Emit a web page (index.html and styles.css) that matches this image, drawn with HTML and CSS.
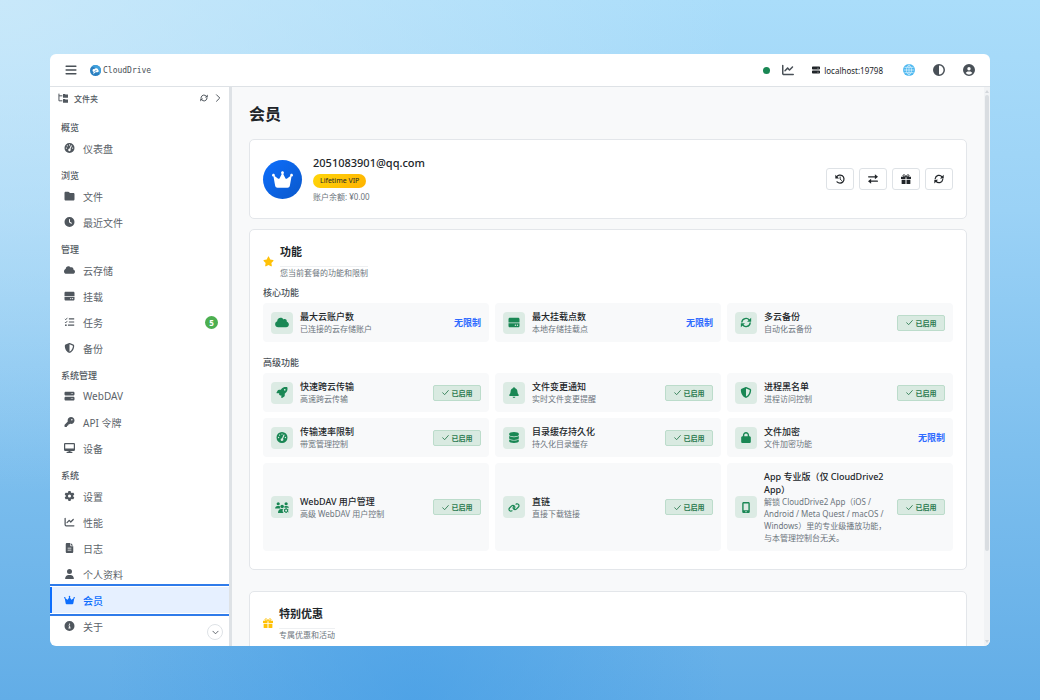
FILE: index.html
```html
<!DOCTYPE html>
<html lang="zh-CN">
<head>
<meta charset="UTF-8">
<title>CloudDrive - 会员</title>
<link rel="stylesheet" href="styles.css">
</head>
<body>

  <svg class="sprite" aria-hidden="true">
    <symbol id="i-bars" viewBox="0 0 16 16"><path d="M1.500 3h13M1.500 8h13M1.500 13h13" fill="none" stroke="currentColor" stroke-width="1.900" stroke-linecap="round"/></symbol>
    <symbol id="i-tree" viewBox="0 0 16 16"><path d="M1.500 1v11.500H7M1.500 4.500H7" fill="none" stroke="currentColor" stroke-width="1.600"/><path d="M8 1.500h3l1 1h4v5H8zM8 9.500h3l1 1h4v5H8z"/></symbol>
    <symbol id="i-sync" viewBox="0 0 16 16"><path d="M2 7.200A6 6 0 0 1 12.800 4.600M14 8.800A6 6 0 0 1 3.200 11.400" fill="none" stroke="currentColor" stroke-width="2" stroke-linecap="round"/><path d="M15.500 1v6h-6zM.500 15V9h6z"/></symbol>
    <symbol id="i-right" viewBox="0 0 16 16"><path d="M5 1.500L11.500 8 5 14.500" fill="none" stroke="currentColor" stroke-width="2" stroke-linecap="round" stroke-linejoin="round"/></symbol>
    <symbol id="i-down" viewBox="0 0 16 16"><path d="M2 5l6 6 6-6" fill="none" stroke="currentColor" stroke-width="2" stroke-linecap="round" stroke-linejoin="round"/></symbol>
    <symbol id="i-check" viewBox="0 0 16 16"><path d="M1.500 8.500L6 13l8.500-9.500" fill="none" stroke="currentColor" stroke-width="2" stroke-linecap="round" stroke-linejoin="round"/></symbol>
    <symbol id="i-gauge" viewBox="0 0 512 512"><path fill-rule="evenodd" d="M0 256a256 256 0 1 1 512 0A256 256 0 1 1 0 256zM256 64a32 32 0 1 0 0 64 32 32 0 1 0 0-64zM144 112a32 32 0 1 0 0 64 32 32 0 1 0 0-64zM96 224a32 32 0 1 0 0 64 32 32 0 1 0 0-64zM416 224a32 32 0 1 0 0 64 32 32 0 1 0 0-64zM324 130L256 288a64 64 0 1 0 48 22L372 150a24 24 0 0 0-48-20z"/></symbol>
    <symbol id="i-folder" viewBox="0 0 512 512"><path d="M64 480H448c35.300 0 64-28.700 64-64V160c0-35.300-28.700-64-64-64H288c-10.100 0-19.600-4.700-25.600-12.800L243.200 57.600C231.100 41.500 212.100 32 192 32H64C28.700 32 0 60.700 0 96V416c0 35.300 28.700 64 64 64z"/></symbol>
    <symbol id="i-clock" viewBox="0 0 512 512"><path d="M256 0a256 256 0 1 1 0 512A256 256 0 1 1 256 0zM232 120V256c0 8 4 15.500 10.700 20l96 64c11 7.400 25.900 4.400 33.300-6.700s4.400-25.900-6.700-33.300L280 243.200V120c0-13.300-10.700-24-24-24s-24 10.700-24 24z"/></symbol>
    <symbol id="i-cloud" viewBox="0 0 640 512"><path d="M0 336c0 79.500 64.500 144 144 144H512c70.700 0 128-57.300 128-128c0-61.900-44-113.600-102.400-125.400c4.100-10.700 6.400-22.400 6.400-34.600c0-53-43-96-96-96c-19.700 0-38.100 6-53.300 16.200C367 64.200 315.300 32 256 32C167.600 32 96 103.600 96 192c0 2.700 .1 5.400 .2 8.100C40.200 219.800 0 273.200 0 336z"/></symbol>
    <symbol id="i-drive" viewBox="0 0 512 512"><path fill-rule="evenodd" d="M0 96C0 60.700 28.700 32 64 32H448c35.300 0 64 28.700 64 64V256H0zM0 296H512V416c0 35.300-28.700 64-64 64H64c-35.300 0-64-28.700-64-64zM320 416a32 32 0 1 0 0-64 32 32 0 1 0 0 64zm128-32a32 32 0 1 0 -64 0 32 32 0 1 0 64 0z"/></symbol>
    <symbol id="i-tasks" viewBox="0 0 16 16"><path d="M7 3h8.500M7 8h8.500M5.500 13h10" fill="none" stroke="currentColor" stroke-width="1.800"/><path d="M.700 3l1.300 1.400L4.500 1.300M.700 8l1.300 1.400 2.500-3.100" fill="none" stroke="currentColor" stroke-width="1.400"/><circle cx="2.200" cy="13" r="1.400"/></symbol>
    <symbol id="i-shield" viewBox="0 0 512 512"><path d="M256 0c4.600 0 9.200 1 13.400 2.900L457.700 82.800c22 9.300 38.400 31 38.300 57.200c-.5 99.200-41.300 280.700-213.600 363.200c-16.700 8-36.100 8-52.800 0C57.300 420.700 16.500 239.200 16 140c-.1-26.200 16.300-47.900 38.300-57.200L242.700 2.900C246.800 1 251.400 0 256 0zm0 66.800V444.800C394 378 431.100 230.100 432 141.400L256 66.800z"/></symbol>
    <symbol id="i-server" viewBox="0 0 512 512"><path d="M64 32C28.700 32 0 60.700 0 96v64c0 35.300 28.700 64 64 64H448c35.300 0 64-28.700 64-64V96c0-35.300-28.700-64-64-64H64zm280 72a24 24 0 1 1 0 48 24 24 0 1 1 0-48zm48 24a24 24 0 1 1 48 0 24 24 0 1 1 -48 0zM64 288c-35.300 0-64 28.700-64 64v64c0 35.300 28.700 64 64 64H448c35.300 0 64-28.700 64-64V352c0-35.300-28.700-64-64-64H64zm280 72a24 24 0 1 1 0 48 24 24 0 1 1 0-48zm56 24a24 24 0 1 1 48 0 24 24 0 1 1 -48 0z"/></symbol>
    <symbol id="i-key" viewBox="0 0 512 512"><path d="M336 352c97.200 0 176-78.800 176-176S433.200 0 336 0S160 78.800 160 176c0 18.700 2.900 36.800 8.300 53.700L7 391c-4.500 4.500-7 10.600-7 17v80c0 13.300 10.700 24 24 24h80c13.300 0 24-10.700 24-24V448h40c13.300 0 24-10.700 24-24V384h40c6.400 0 12.500-2.500 17-7l33.300-33.300c16.900 5.400 35 8.300 53.700 8.300zM376 96a40 40 0 1 1 0 80 40 40 0 1 1 0-80z"/></symbol>
    <symbol id="i-desktop" viewBox="0 0 576 512"><path d="M64 0C28.700 0 0 28.700 0 64V352c0 35.300 28.700 64 64 64H240l-10.700 32H160c-17.700 0-32 14.300-32 32s14.300 32 32 32H416c17.700 0 32-14.300 32-32s-14.300-32-32-32H346.700L336 416H512c35.300 0 64-28.700 64-64V64c0-35.300-28.700-64-64-64H64zM512 64V288H64V64H512z"/></symbol>
    <symbol id="i-gear" viewBox="0 0 512 512"><path d="M495.900 166.600c3.200 8.700 .5 18.400-6.400 24.600l-43.300 39.400c1.100 8.300 1.700 16.800 1.700 25.400s-.6 17.100-1.700 25.400l43.300 39.400c6.900 6.200 9.600 15.900 6.400 24.600c-4.400 11.900-9.700 23.300-15.800 34.300l-4.700 8.100c-6.600 11-14 21.400-22.100 31.200c-5.900 7.200-15.700 9.600-24.500 6.800l-55.700-17.700c-13.400 10.300-28.200 18.900-44 25.400l-12.500 57.100c-2 9.100-9 16.300-18.200 17.800c-13.800 2.300-28 3.500-42.500 3.500s-28.700-1.200-42.500-3.500c-9.200-1.500-16.200-8.700-18.200-17.800l-12.500-57.100c-15.800-6.500-30.600-15.100-44-25.400L83.100 425.900c-8.800 2.800-18.600 .3-24.500-6.800c-8.100-9.800-15.500-20.200-22.100-31.200l-4.700-8.100c-6.100-11-11.400-22.400-15.800-34.300c-3.200-8.700-.5-18.400 6.400-24.600l43.300-39.400C64.600 273.100 64 264.600 64 256s.6-17.100 1.700-25.400L22.400 191.200c-6.900-6.200-9.600-15.900-6.400-24.600c4.400-11.900 9.700-23.300 15.800-34.300l4.700-8.100c6.600-11 14-21.400 22.100-31.200c5.900-7.200 15.700-9.600 24.500-6.800l55.700 17.700c13.400-10.300 28.200-18.900 44-25.400l12.500-57.100c2-9.100 9-16.300 18.200-17.800C227.300 1.200 241.500 0 256 0s28.700 1.200 42.500 3.500c9.200 1.500 16.200 8.700 18.200 17.800l12.500 57.100c15.800 6.500 30.600 15.100 44 25.400l55.700-17.700c8.800-2.800 18.600-.3 24.500 6.800c8.100 9.800 15.500 20.200 22.100 31.200l4.700 8.100c6.100 11 11.400 22.400 15.800 34.300zM256 336a80 80 0 1 0 0-160 80 80 0 1 0 0 160z"/></symbol>
    <symbol id="i-chart" viewBox="0 0 512 512"><path d="M64 64c0-17.700-14.300-32-32-32S0 46.300 0 64V400c0 44.200 35.800 80 80 80H480c17.700 0 32-14.300 32-32s-14.300-32-32-32H80c-8.800 0-16-7.200-16-16V64zm406.600 86.600c12.500-12.500 12.500-32.800 0-45.300s-32.800-12.500-45.300 0L320 210.700l-57.400-57.400c-12.500-12.500-32.800-12.500-45.300 0l-112 112c-12.500 12.500-12.500 32.800 0 45.300s32.800 12.500 45.300 0L240 221.300l57.400 57.400c12.500 12.500 32.800 12.500 45.300 0l128-128z"/></symbol>
    <symbol id="i-file" viewBox="0 0 384 512"><path fill-rule="evenodd" d="M64 0C28.700 0 0 28.700 0 64V448c0 35.300 28.700 64 64 64H320c35.300 0 64-28.700 64-64V160H256c-17.700 0-32-14.300-32-32V0H64zM256 0V128H384zM96 240H288v40H96zM96 340H288v40H96z"/></symbol>
    <symbol id="i-user" viewBox="0 0 448 512"><path d="M224 256A128 128 0 1 0 224 0a128 128 0 1 0 0 256zm-45.700 48C79.800 304 0 383.800 0 482.300C0 498.700 13.300 512 29.700 512H418.300c16.400 0 29.700-13.300 29.700-29.700C448 383.800 368.200 304 269.700 304H178.300z"/></symbol>
    <symbol id="i-crown" viewBox="0 0 576 512"><path d="M309 106c11.400-7 19-19.700 19-34c0-22.100-17.900-40-40-40s-40 17.900-40 40c0 14.400 7.600 27 19 34L209.700 220.600c-9.100 18.200-32.700 23.400-48.600 10.700L72 160c5-6.700 8-15 8-24c0-22.100-17.900-40-40-40S0 113.900 0 136s17.900 40 40 40c.2 0 .5 0 .7 0L86.400 427.400c5.500 30.400 32 52.600 63 52.600l277.200 0c30.900 0 57.400-22.100 63-52.600L535.300 176c.2 0 .5 0 .7 0c22.100 0 40-17.900 40-40s-17.900-40-40-40s-40 17.900-40 40c0 9 3 17.300 8 24l-89.100 71.300c-15.900 12.700-39.500 7.500-48.600-10.700L309 106z"/></symbol>
    <symbol id="i-info" viewBox="0 0 512 512"><path d="M256 512A256 256 0 1 0 256 0a256 256 0 1 0 0 512zM216 336h24V272H216c-13.300 0-24-10.700-24-24s10.700-24 24-24h48c13.300 0 24 10.700 24 24v88h8c13.300 0 24 10.700 24 24s-10.700 24-24 24H216c-13.300 0-24-10.700-24-24s10.700-24 24-24zm40-208a32 32 0 1 1 0 64 32 32 0 1 1 0-64z"/></symbol>
    <symbol id="i-globe" viewBox="0 0 16 16"><circle cx="8" cy="8" r="8" fill="#4db8f0"/><path d="M8 1v14M1 8h14M2 4.500h12M2 11.500h12M8 1C3.500 4 3.500 12 8 15M8 1c4.500 3 4.500 11 0 14" fill="none" stroke="#d5effc" stroke-width="1"/></symbol>
    <symbol id="i-half" viewBox="0 0 512 512"><path d="M448 256c0-106-86-192-192-192V448c106 0 192-86 192-192zM0 256a256 256 0 1 1 512 0A256 256 0 1 1 0 256z"/></symbol>
    <symbol id="i-account" viewBox="0 0 512 512"><path d="M399 384.200C376.900 345.800 335.400 320 288 320H224c-47.400 0-88.900 25.800-111 64.200c35.200 39.200 86.200 63.800 143 63.800s107.800-24.700 143-63.800zM0 256a256 256 0 1 1 512 0A256 256 0 1 1 0 256zm256 16a72 72 0 1 0 0-144 72 72 0 1 0 0 144z"/></symbol>
    <symbol id="i-history" viewBox="0 0 16 16"><path d="M2.500 4.800A6.400 6.400 0 1 1 3.300 12.500" fill="none" stroke="currentColor" stroke-width="2" stroke-linecap="round"/><path d="M.500 1v6h6z"/><path d="M8.200 4.800v3.500l2.300 2" fill="none" stroke="currentColor" stroke-width="1.500" stroke-linecap="round"/></symbol>
    <symbol id="i-exchange" viewBox="0 0 16 16"><path d="M1 4.500h11M15 11.500H4" fill="none" stroke="currentColor" stroke-width="2" stroke-linecap="round"/><path d="M11 .500l5 4-5 4zM5 7.500l-5 4 5 4z"/></symbol>
    <symbol id="i-gift" viewBox="0 0 16 16"><path d="M0 4.500h7.200v3.600H0zM8.800 4.500H16v3.600H8.800zM1 9.300h6.200V16H2a1 1 0 0 1-1-1zM8.800 9.300H15V15a1 1 0 0 1-1 1H8.800z"/><path d="M8 4.500C6.500 1.500 5.500 1 4.600 1a1.800 1.800 0 0 0 0 3.500zM8 4.500C9.500 1.500 10.500 1 11.400 1a1.800 1.800 0 0 1 0 3.500z" fill="none" stroke="currentColor" stroke-width="1.500"/></symbol>
    <symbol id="i-star" viewBox="0 0 576 512"><path d="M316.900 18C311.600 7 300.400 0 288.100 0s-23.400 7-28.800 18L195 150.300 51.400 171.500c-12 1.800-22 10.200-25.700 21.700s-.7 24.200 7.900 32.700L137.800 329 113.200 474.700c-2 12 3 24.200 12.900 31.300s23 8 33.800 2.300l128.300-68.500 128.300 68.500c10.800 5.700 23.900 4.900 33.800-2.300s14.900-19.300 12.900-31.300L438.500 329 542.700 225.900c8.600-8.500 11.700-21.200 7.900-32.700s-13.700-19.900-25.700-21.700L381.200 150.300 316.900 18z"/></symbol>
    <symbol id="i-rocket" viewBox="0 0 512 512"><path d="M156.600 384.900L125.700 354c-8.500-8.500-11.500-20.800-7.700-32.200c3-8.900 7-20.500 11.800-33.800L24 288c-8.600 0-16.600-4.600-20.900-12.100s-4.200-16.700 .2-24.100l52.500-88.500c13-21.900 36.500-35.300 61.900-35.300l82.300 0c2.400-4 4.800-7.700 7.200-11.300C289.100-4.100 411.100-8.100 483.900 5.300c11.600 2.100 20.600 11.200 22.800 22.800c13.400 72.900 9.300 194.800-111.400 276.700c-3.500 2.400-7.300 4.800-11.300 7.200v82.300c0 25.400-13.400 49-35.300 61.900l-88.500 52.500c-7.400 4.400-16.600 4.500-24.100 .2s-12.100-12.200-12.100-20.900V380.800c-14.100 4.900-26.400 8.900-35.700 11.900c-11.200 3.600-23.400 .5-31.800-7.800zM384 168a40 40 0 1 0 0-80 40 40 0 1 0 0 80z"/></symbol>
    <symbol id="i-bell" viewBox="0 0 448 512"><path d="M224 0c-17.700 0-32 14.300-32 32V51.200C119 66 64 130.600 64 208v18.800c0 47-17.300 92.400-48.500 127.600l-7.400 8.300c-8.400 9.400-10.400 22.900-5.300 34.400S19.400 416 32 416H416c12.600 0 24-7.400 29.200-18.900s3.100-25-5.300-34.400l-7.400-8.300C401.300 319.200 384 273.900 384 226.800V208c0-77.400-55-142-128-156.800V32c0-17.700-14.300-32-32-32zm45.300 493.300c12-12 18.700-28.300 18.700-45.300H224 160c0 17 6.700 33.300 18.700 45.300s28.300 18.700 45.300 18.700s33.300-6.700 45.300-18.700z"/></symbol>
    <symbol id="i-db" viewBox="0 0 448 512"><path d="M448 80v48c0 44.200-100.300 80-224 80S0 172.200 0 128V80C0 35.800 100.300 0 224 0S448 35.800 448 80zM393.200 214.700c20.800-7.400 39.900-16.900 54.800-28.600V288c0 44.200-100.300 80-224 80S0 332.200 0 288V186.100c14.900 11.800 34 21.200 54.800 28.600C99.700 230.700 159.500 240 224 240s124.300-9.300 169.200-25.300zM0 346.100c14.900 11.800 34 21.200 54.800 28.600C99.700 390.700 159.500 400 224 400s124.300-9.300 169.200-25.300c20.800-7.400 39.900-16.900 54.800-28.600V432c0 44.200-100.300 80-224 80S0 476.200 0 432V346.100z"/></symbol>
    <symbol id="i-lock" viewBox="0 0 448 512"><path d="M144 144v48H304V144c0-44.200-35.800-80-80-80s-80 35.800-80 80zM80 192V144C80 64.500 144.500 0 224 0s144 64.500 144 144v48h16c35.300 0 64 28.700 64 64V448c0 35.300-28.700 64-64 64H64c-35.300 0-64-28.700-64-64V256c0-35.300 28.700-64 64-64H80z"/></symbol>
    <symbol id="i-users" viewBox="0 0 20 16"><circle cx="4.500" cy="2.500" r="2.300"/><circle cx="16" cy="2.500" r="2.300"/><circle cx="10.200" cy="6.500" r="2.600"/><path d="M0 9.500C0 7 1.500 5.700 3.500 5.700h1.800c.8 0 1.300.2 1.700.5-.3 1.300.1 2.500.9 3.300zM20 8.500c0-1.800-1.500-2.800-3-2.800h-1.800c-.8 0-1.300.2-1.700.5.2.8.1 1.600-.1 2.300zM4.200 16c0-3.500 2-5.700 4.600-5.700h2.700c-1 2-.8 4.200.6 5.700z"/><circle cx="16" cy="12.500" r="2.300" fill="none" stroke="currentColor" stroke-width="1.600"/><path d="M16 8.800v1.600M16 14.600v1.400M12.700 10.700l1.400.8M18 13.600l1.400.8M19.300 10.700l-1.400.8M14 13.600l-1.400.8" stroke="currentColor" stroke-width="1.400"/></symbol>
    <symbol id="i-link" viewBox="0 0 640 512"><path d="M580 254c52-52 52-136 0-188c-46-46-119-52-172-14l-2 1c-14 10-17 30-7 44s30 17 44 7l2-1c27-20 65-17 89 7c27 27 27 71 0 98L422 321c-27 27-71 27-98 0c-24-24-27-62-7-89l1-2c10-14 7-34-7-44s-34-7-44 7l-1 2c-38 53-32 126 14 172c52 52 136 52 188 0zM60 258c-52 52-52 136 0 188c46 46 119 52 172 14l2-1c14-10 17-30 7-44s-30-17-44-7l-2 1c-27 20-65 17-89-7c-27-27-27-71 0-98L218 191c27-27 71-27 98 0c24 24 27 62 7 89l-1 2c-10 14-7 34 7 44s34 7 44-7l1-2c38-53 32-126-14-172c-52-52-136-52-188 0z"/></symbol>
    <symbol id="i-mobile" viewBox="0 0 384 512"><path fill-rule="evenodd" d="M16 64C16 28.700 44.700 0 80 0H304c35.300 0 64 28.700 64 64V448c0 35.300-28.700 64-64 64H80c-35.300 0-64-28.700-64-64zM80 64H304V384H80zM192 416a32 32 0 1 0 0 64 32 32 0 1 0 0-64z"/></symbol>
  </svg>

  <div class="window">
    <header class="topbar">
      <button class="icon-button menu-button" aria-label="菜单"><svg class="icon"><use href="#i-bars"/></svg></button>
      <a class="brand" href="#">
        <svg class="brand-logo" viewBox="0 0 24 24"><circle cx="12" cy="12" r="12" fill="#2a7fc1"/><path d="M12 0a12 12 0 0 1 12 12c0 4-2 7-4 9C20 12 14 6 4 3c2-2 5-3 8-3z" fill="#3fa0dc"/><path d="M8 15a3 3 0 0 1 1-6 5 5 0 0 1 9 2 3 3 0 0 1-1 5h-5l-5 4 1-5z" fill="#fff"/><path d="M10 15l4-4" stroke="#2a7fc1" stroke-width="2"/></svg>
        <span>CloudDrive</span>
      </a>
      <div class="topbar-right">
        <span class="status-dot"></span>
        <button class="icon-button" aria-label="性能"><svg class="icon"><use href="#i-chart"/></svg></button>
        <a class="host" href="#"><svg class="icon"><use href="#i-server"/></svg>localhost:19798</a>
        <div class="topbar-actions">
          <button class="icon-button" aria-label="语言"><svg class="icon"><use href="#i-globe"/></svg></button>
          <button class="icon-button" aria-label="主题"><svg class="icon"><use href="#i-half"/></svg></button>
          <button class="icon-button" aria-label="账户"><svg class="icon"><use href="#i-account"/></svg></button>
        </div>
      </div>
    </header>

    <div class="layout">
      <aside class="sidebar">
        <div class="folder-bar">
          <svg class="icon"><use href="#i-tree"/></svg>
          <span class="folder-title">文件夹</span>
          <button class="icon-button small" aria-label="刷新"><svg class="icon"><use href="#i-sync"/></svg></button>
          <button class="icon-button small" aria-label="展开"><svg class="icon"><use href="#i-right"/></svg></button>
        </div>
        <nav class="nav">
          <h2 class="nav-label">概览</h2>
          <ul class="nav-list">
            <li><a class="nav-item" href="#"><svg class="icon"><use href="#i-gauge"/></svg>仪表盘</a></li>
          </ul>
          <h2 class="nav-label">浏览</h2>
          <ul class="nav-list">
            <li><a class="nav-item" href="#"><svg class="icon"><use href="#i-folder"/></svg>文件</a></li>
            <li><a class="nav-item" href="#"><svg class="icon"><use href="#i-clock"/></svg>最近文件</a></li>
          </ul>
          <h2 class="nav-label">管理</h2>
          <ul class="nav-list">
            <li><a class="nav-item" href="#"><svg class="icon"><use href="#i-cloud"/></svg>云存储</a></li>
            <li><a class="nav-item" href="#"><svg class="icon"><use href="#i-drive"/></svg>挂载</a></li>
            <li><a class="nav-item" href="#"><svg class="icon"><use href="#i-tasks"/></svg>任务<span class="count">5</span></a></li>
            <li><a class="nav-item" href="#"><svg class="icon"><use href="#i-shield"/></svg>备份</a></li>
          </ul>
          <h2 class="nav-label">系统管理</h2>
          <ul class="nav-list">
            <li><a class="nav-item" href="#"><svg class="icon"><use href="#i-server"/></svg>WebDAV</a></li>
            <li><a class="nav-item" href="#"><svg class="icon"><use href="#i-key"/></svg>API 令牌</a></li>
            <li><a class="nav-item" href="#"><svg class="icon"><use href="#i-desktop"/></svg>设备</a></li>
          </ul>
          <h2 class="nav-label">系统</h2>
          <ul class="nav-list">
            <li><a class="nav-item" href="#"><svg class="icon"><use href="#i-gear"/></svg>设置</a></li>
            <li><a class="nav-item" href="#"><svg class="icon"><use href="#i-chart"/></svg>性能</a></li>
            <li><a class="nav-item" href="#"><svg class="icon"><use href="#i-file"/></svg>日志</a></li>
            <li><a class="nav-item" href="#"><svg class="icon"><use href="#i-user"/></svg>个人资料</a></li>
            <li><a class="nav-item active" href="#" aria-current="page"><svg class="icon"><use href="#i-crown"/></svg>会员</a></li>
            <li><a class="nav-item" href="#"><svg class="icon"><use href="#i-info"/></svg>关于</a></li>
          </ul>
        </nav>
        <button class="scroll-button" aria-label="向下滚动"><svg class="icon"><use href="#i-down"/></svg></button>
      </aside>

      <main class="content">
        <h1 class="page-title">会员</h1>

        <section class="card profile">
          <div class="avatar"><svg class="icon"><use href="#i-crown"/></svg></div>
          <div class="profile-text">
            <div class="email">2051083901@qq.com</div>
            <span class="vip">Lifetime VIP</span>
            <div class="balance">账户余额: ¥0.00</div>
          </div>
          <div class="profile-actions">
            <button class="action" aria-label="历史"><svg class="icon"><use href="#i-history"/></svg></button>
            <button class="action" aria-label="转移"><svg class="icon"><use href="#i-exchange"/></svg></button>
            <button class="action" aria-label="礼品"><svg class="icon"><use href="#i-gift"/></svg></button>
            <button class="action" aria-label="刷新"><svg class="icon"><use href="#i-sync"/></svg></button>
          </div>
        </section>

        <section class="card features">
          <div class="card-head">
            <svg class="icon star"><use href="#i-star"/></svg>
            <div>
              <h2 class="card-title">功能</h2>
              <p class="card-desc">您当前套餐的功能和限制</p>
            </div>
          </div>

          <h3 class="group-label">核心功能</h3>
          <div class="feature-grid">
            <div class="feature">
              <span class="feature-icon"><svg class="icon wide"><use href="#i-cloud"/></svg></span>
              <div class="feature-text"><div class="feature-name">最大云账户数</div><div class="feature-desc">已连接的云存储账户</div></div>
              <span class="unlimited">无限制</span>
            </div>
            <div class="feature">
              <span class="feature-icon"><svg class="icon"><use href="#i-drive"/></svg></span>
              <div class="feature-text"><div class="feature-name">最大挂载点数</div><div class="feature-desc">本地存储挂载点</div></div>
              <span class="unlimited">无限制</span>
            </div>
            <div class="feature">
              <span class="feature-icon"><svg class="icon"><use href="#i-sync"/></svg></span>
              <div class="feature-text"><div class="feature-name">多云备份</div><div class="feature-desc">自动化云备份</div></div>
              <span class="enabled"><svg class="icon"><use href="#i-check"/></svg>已启用</span>
            </div>
          </div>

          <h3 class="group-label">高级功能</h3>
          <div class="feature-grid">
            <div class="feature">
              <span class="feature-icon"><svg class="icon"><use href="#i-rocket"/></svg></span>
              <div class="feature-text"><div class="feature-name">快速跨云传输</div><div class="feature-desc">高速跨云传输</div></div>
              <span class="enabled"><svg class="icon"><use href="#i-check"/></svg>已启用</span>
            </div>
            <div class="feature">
              <span class="feature-icon"><svg class="icon"><use href="#i-bell"/></svg></span>
              <div class="feature-text"><div class="feature-name">文件变更通知</div><div class="feature-desc">实时文件变更提醒</div></div>
              <span class="enabled"><svg class="icon"><use href="#i-check"/></svg>已启用</span>
            </div>
            <div class="feature">
              <span class="feature-icon"><svg class="icon"><use href="#i-shield"/></svg></span>
              <div class="feature-text"><div class="feature-name">进程黑名单</div><div class="feature-desc">进程访问控制</div></div>
              <span class="enabled"><svg class="icon"><use href="#i-check"/></svg>已启用</span>
            </div>
            <div class="feature">
              <span class="feature-icon"><svg class="icon"><use href="#i-gauge"/></svg></span>
              <div class="feature-text"><div class="feature-name">传输速率限制</div><div class="feature-desc">带宽管理控制</div></div>
              <span class="enabled"><svg class="icon"><use href="#i-check"/></svg>已启用</span>
            </div>
            <div class="feature">
              <span class="feature-icon"><svg class="icon"><use href="#i-db"/></svg></span>
              <div class="feature-text"><div class="feature-name">目录缓存持久化</div><div class="feature-desc">持久化目录缓存</div></div>
              <span class="enabled"><svg class="icon"><use href="#i-check"/></svg>已启用</span>
            </div>
            <div class="feature">
              <span class="feature-icon"><svg class="icon"><use href="#i-lock"/></svg></span>
              <div class="feature-text"><div class="feature-name">文件加密</div><div class="feature-desc">文件加密功能</div></div>
              <span class="unlimited">无限制</span>
            </div>
            <div class="feature">
              <span class="feature-icon"><svg class="icon wide"><use href="#i-users"/></svg></span>
              <div class="feature-text"><div class="feature-name">WebDAV 用户管理</div><div class="feature-desc">高级 WebDAV 用户控制</div></div>
              <span class="enabled"><svg class="icon"><use href="#i-check"/></svg>已启用</span>
            </div>
            <div class="feature">
              <span class="feature-icon"><svg class="icon"><use href="#i-link"/></svg></span>
              <div class="feature-text"><div class="feature-name">直链</div><div class="feature-desc">直接下载链接</div></div>
              <span class="enabled"><svg class="icon"><use href="#i-check"/></svg>已启用</span>
            </div>
            <div class="feature">
              <span class="feature-icon"><svg class="icon"><use href="#i-mobile"/></svg></span>
              <div class="feature-text"><div class="feature-name">App 专业版（仅 CloudDrive2 App）</div><div class="feature-desc">解锁 CloudDrive2 App（iOS / Android / Meta Quest / macOS / Windows）里的专业级播放功能，与本管理控制台无关。</div></div>
              <span class="enabled"><svg class="icon"><use href="#i-check"/></svg>已启用</span>
            </div>
          </div>
        </section>

        <section class="card offers">
          <div class="card-head">
            <svg class="icon gift"><use href="#i-gift"/></svg>
            <div>
              <h2 class="card-title">特别优惠</h2>
              <p class="card-desc">专属优惠和活动</p>
            </div>
          </div>
        </section>
      </main>
      <div class="scrollbar" aria-hidden="true">
        <span class="arrow up"></span>
        <span class="track"><span class="thumb"></span></span>
        <span class="arrow down"></span>
      </div>
    </div>
  </div>

</body>
</html>
```
FILE: styles.css
```css
* {
  box-sizing: border-box;
}
body {
  margin: 0;
  padding: 54px 50px;
  height: 100vh;
  font-family: "Noto Sans", "Noto Sans CJK SC", sans-serif;
  font-size: 9px;
  color: #212529;
  background:
    radial-gradient(ellipse at 40% 100%, rgba(66, 156, 230, 0.6), rgba(66, 156, 230, 0) 35%),
    radial-gradient(ellipse at 0% 0%, rgba(208, 235, 250, 0.8), rgba(208, 235, 250, 0) 50%),
    linear-gradient(180deg, #aaddfa 0%, #9bd2f6 30%, #7dbfee 65%, #62ade7 100%);
}
h1, h2, h3, p, ul {
  margin: 0;
  padding: 0;
}
ul {
  list-style: none;
}
a {
  color: inherit;
  text-decoration: none;
}
button {
  padding: 0;
  border: none;
  background: none;
  color: inherit;
  font: inherit;
  cursor: pointer;
}
.sprite {
  display: none;
}
.icon {
  display: block;
  flex: none;
  width: 10px;
  height: 10px;
  fill: currentColor;
}
.window {
  display: flex;
  flex-direction: column;
  height: 100%;
  border-radius: 6px;
  background: #fff;
  overflow: hidden;
}

/* top bar */
.topbar {
  display: flex;
  align-items: center;
  flex: none;
  height: 33px;
  padding: 0 15px;
  border-bottom: 1px solid #dee2e6;
  color: #495057;
}
.icon-button .icon {
  width: 12px;
  height: 12px;
}
.icon-button.small .icon {
  width: 8px;
  height: 8px;
}
.brand {
  display: flex;
  align-items: center;
  gap: 2px;
  margin-left: 13px;
  font-family: "DejaVu Sans Mono", monospace;
  font-size: 8px;
}
.brand-logo {
  width: 11px;
  height: 11px;
}
.topbar-right {
  display: flex;
  align-items: center;
  margin-left: auto;
}
.status-dot {
  width: 7px;
  height: 7px;
  margin-right: 12px;
  border-radius: 50%;
  background: #198754;
}
.host {
  display: flex;
  align-items: center;
  gap: 4px;
  margin: 0 20px 0 18px;
  font-size: 8px;
  color: #212529;
}
.host .icon {
  width: 8px;
  height: 8px;
}
.topbar-actions {
  display: flex;
  gap: 18px;
}

/* sidebar */
.layout {
  display: flex;
  flex: 1;
  min-height: 0;
}
.sidebar {
  position: relative;
  flex: none;
  width: 182px;
  border-right: 3px solid #dee2e6;
  overflow: hidden;
  color: #50575e;
}
.folder-bar {
  display: flex;
  align-items: center;
  gap: 6px;
  height: 22px;
  padding: 0 7px 0 8px;
}
.folder-title {
  flex: 1;
  font-size: 8px;
  font-weight: 500;
}
.nav {
  padding-top: 12px;
}
.nav-label {
  padding-left: 11px;
  font-size: 9px;
  line-height: 14px;
  font-weight: 500;
}
.nav-list {
  margin-bottom: 8px;
}
.nav-item {
  display: flex;
  align-items: center;
  gap: 8px;
  height: 26px;
  padding: 0 11px 0 12px;
  border-left: 2px solid transparent;
  font-size: 10px;
  color: #5c636a;
}
.nav-item .icon {
  width: 11px;
  color: #50575e;
}
.nav-item.active {
  border-left-color: #0d6efd;
  outline: 2px solid #2f7bea;
  outline-offset: 1px;
  background: #e6f0ff;
  color: #0d6efd;
  font-weight: 500;
}
.nav-item.active .icon {
  color: #0d6efd;
}
.count {
  width: 13px;
  height: 13px;
  margin-left: auto;
  border-radius: 50%;
  background: #4caf50;
  color: #fff;
  font-size: 8px;
  line-height: 13px;
  font-weight: bold;
  text-align: center;
}
.scroll-button {
  position: absolute;
  right: 6px;
  bottom: 6px;
  display: flex;
  align-items: center;
  justify-content: center;
  width: 16px;
  height: 16px;
  border: 1px solid #dee2e6;
  border-radius: 50%;
  background: #fff;
}
.scroll-button .icon {
  width: 7px;
  height: 7px;
}

/* content */
.content {
  flex: 1;
  min-width: 0;
  padding: 15px 17px;
  background: #f8f9fa;
  overflow-y: auto;
  scrollbar-width: none;
}
.scrollbar {
  display: flex;
  flex-direction: column;
  flex: none;
  width: 6px;
  padding: 3px 1px;
  background: #f1f3f5;
}
.track {
  flex: 1;
  padding: 2px 0;
}
.thumb {
  display: block;
  height: 84%;
  border-radius: 2px;
  background: #d9dde1;
}
.arrow {
  border: 2px solid transparent;
}
.arrow.up {
  border-top: 0;
  border-bottom: 3px solid #d3d7db;
}
.arrow.down {
  border-bottom: 0;
  border-top: 3px solid #d3d7db;
}
.page-title {
  margin-bottom: 13px;
  font-size: 16px;
  line-height: 24px;
  font-weight: 600;
}
.card {
  padding: 13px;
  border: 1px solid #e3e6ea;
  border-radius: 5px;
  background: #fff;
}
.profile {
  display: flex;
  align-items: center;
  gap: 11px;
  margin-bottom: 10px;
  padding: 15px 13px;
}
.avatar {
  display: flex;
  align-items: center;
  justify-content: center;
  width: 39px;
  height: 39px;
  border-radius: 50%;
  background: linear-gradient(135deg, #0d6efd, #0a58ca);
  color: #fff;
}
.avatar .icon {
  width: 21px;
  height: 19px;
}
.email {
  margin-bottom: 3px;
  font-size: 11px;
  line-height: 16px;
  font-weight: 500;
}
.vip {
  display: block;
  width: fit-content;
  padding: 0 7px;
  border-radius: 7px;
  background: linear-gradient(135deg, #ffd60a, #ffb300);
  font-size: 7px;
  line-height: 14px;
}
.balance {
  margin-top: 3px;
  font-size: 8px;
  line-height: 12px;
  color: #6c757d;
}
.profile-actions {
  display: flex;
  gap: 5px;
  margin-left: auto;
}
.action {
  display: flex;
  align-items: center;
  justify-content: center;
  width: 28px;
  height: 22px;
  border: 1px solid #dee2e6;
  border-radius: 3px;
  background: #fff;
}
.features {
  margin-bottom: 21px;
  padding-bottom: 18px;
}
.offers {
  min-height: 160px;
}
.card-head {
  display: flex;
  align-items: center;
  gap: 6px;
  margin-bottom: 8px;
}
.star,
.gift {
  color: #ffc107;
}
.star {
  width: 11px;
  height: 11px;
}
.card-title {
  margin-bottom: 5px;
  font-size: 11px;
  line-height: 18px;
  font-weight: 600;
}
.card-desc {
  border-top: 1px solid #eef0f2;
  font-size: 8px;
  line-height: 12px;
  color: #6c757d;
}
.group-label {
  margin-bottom: 4px;
  font-size: 9px;
  line-height: 12px;
  font-weight: 500;
  color: #495057;
}
.feature-grid + .group-label {
  margin-top: 15px;
}
.feature-grid {
  display: grid;
  grid-template-columns: repeat(3, 1fr);
  gap: 6px;
}
.feature {
  display: flex;
  align-items: center;
  gap: 4px;
  padding: 7px 8px;
  border-radius: 4px;
  background: #f8f9fa;
}
.feature-icon {
  display: flex;
  align-items: center;
  justify-content: center;
  flex: none;
  width: 22px;
  height: 22px;
  border-radius: 4px;
  background: #dcebe4;
  color: #198754;
}
.feature-icon .icon {
  width: 12px;
  height: 11px;
}
.feature-icon .wide {
  width: 14px;
}
.feature-text {
  flex: 1;
  min-width: 0;
  padding-left: 3px;
}
.feature-name {
  font-size: 9px;
  line-height: 13px;
  font-weight: 500;
}
.feature-desc {
  font-size: 8px;
  line-height: 12px;
  color: #6c757d;
}
.unlimited {
  font-size: 9px;
  font-weight: 700;
  color: #2f6bff;
}
.enabled {
  display: flex;
  align-items: center;
  justify-content: center;
  gap: 3px;
  flex: none;
  width: 48px;
  height: 16px;
  border: 1px solid #bcdccb;
  border-radius: 2px;
  background: #d9eae1;
  color: #2c7a50;
  font-size: 7px;
  font-weight: 700;
}
.enabled .icon {
  width: 7px;
  height: 7px;
}
```
